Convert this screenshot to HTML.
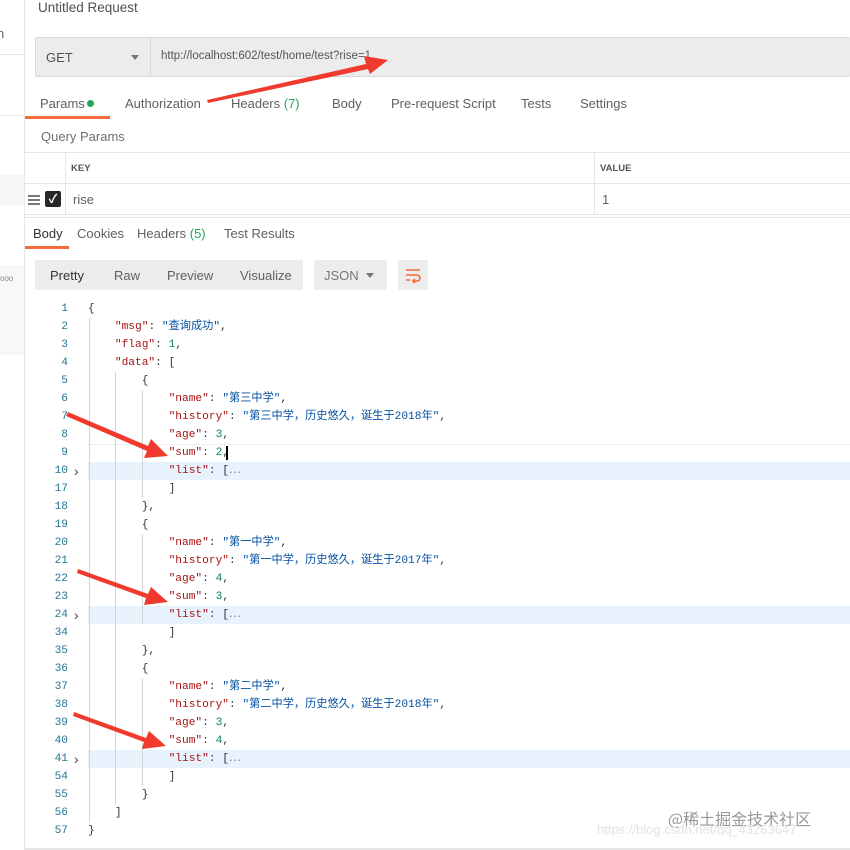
<!DOCTYPE html>
<html><head><meta charset="utf-8"><style>
*{margin:0;padding:0;box-sizing:border-box}
body{width:850px;height:850px;overflow:hidden;background:#fff;font-family:"Liberation Sans","Noto Sans CJK SC",sans-serif;position:relative;color:#505050}
.a{position:absolute}
.t{font-size:13px;color:#606060;white-space:nowrap}
.code{font-family:"Liberation Mono","Noto Sans CJK SC",monospace;font-size:11.2px;white-space:pre;line-height:18px}
.ln{position:absolute;left:30px;width:38px;text-align:right;color:#237893;font-family:"Liberation Mono",monospace;font-size:11.2px;line-height:18px}
.k{color:#a31515}.s{color:#0451a5}.n{color:#098658}.p{color:#333}
.g{position:absolute;width:1px;background:#d3d3d3}
.ch{position:absolute;left:74px;color:#444;font-size:14px;font-family:"Liberation Sans",sans-serif}
</style></head><body>
<div class="a" style="left:24px;top:0;width:1px;height:850px;background:#e6e6e6"></div>
<div class="a" style="left:0;top:54px;width:24px;height:1px;background:#e6e6e6"></div>
<div class="a" style="left:0;top:115px;width:24px;height:1px;background:#ececec"></div>
<div class="a" style="left:0;top:175px;width:24px;height:30px;background:#f6f6f6"></div>
<div class="a" style="left:0;top:265px;width:24px;height:90px;background:#f8f8f8"></div>
<div class="a t" style="left:-3px;top:26px;font-size:13px">n</div>
<div class="a" style="left:0;top:274px;font-size:8px;color:#888">ooo</div>

<div class="a" style="left:38px;top:0px;font-size:13.5px;color:#505050">Untitled Request</div>
<div class="a" style="left:35px;top:37px;width:815px;height:40px;background:#ececec;border:1px solid #d8d8d8;border-right:none;border-radius:2px"></div>
<div class="a" style="left:150px;top:38px;width:1px;height:38px;background:#d8d8d8"></div>
<div class="a t" style="left:46px;top:50px;color:#505050">GET</div>
<div class="a" style="left:131px;top:55px;border-left:4px solid transparent;border-right:4px solid transparent;border-top:5px solid #777"></div>
<div class="a t" style="left:161px;top:50px;font-size:11.5px;color:#555">http://localhost:602/test/home/test?rise=1</div>
<div class="a t" style="left:40px;top:96px">Params</div>
<div class="a" style="left:87px;top:100px;width:7px;height:7px;border-radius:50%;background:#26a55a"></div>
<div class="a" style="left:25px;top:116px;width:85px;height:3px;background:#f26b3a"></div>
<div class="a t" style="left:125px;top:96px">Authorization</div>
<div class="a t" style="left:231px;top:96px">Headers <span style="color:#26a55a">(7)</span></div>
<div class="a t" style="left:332px;top:96px">Body</div>
<div class="a t" style="left:391px;top:96px">Pre-request Script</div>
<div class="a t" style="left:521px;top:96px">Tests</div>
<div class="a t" style="left:580px;top:96px">Settings</div>
<div class="a t" style="left:41px;top:129px;color:#707070">Query Params</div>
<div class="a" style="left:25px;top:152px;width:825px;height:1px;background:#e6e6e6"></div>
<div class="a" style="left:25px;top:183px;width:825px;height:1px;background:#e6e6e6"></div>
<div class="a" style="left:25px;top:214px;width:825px;height:1px;background:#e6e6e6"></div>
<div class="a" style="left:65px;top:152px;width:1px;height:63px;background:#e6e6e6"></div>
<div class="a" style="left:594px;top:152px;width:1px;height:63px;background:#e6e6e6"></div>
<div class="a" style="left:71px;top:163px;font-size:9.5px;font-weight:bold;color:#555">KEY</div>
<div class="a" style="left:600px;top:163px;font-size:9.5px;font-weight:bold;color:#555">VALUE</div>
<div class="a" style="left:28px;top:195px;width:12px;height:2px;background:#777;box-shadow:0 4px 0 #777,0 8px 0 #777"></div>
<div class="a" style="left:45px;top:191px;width:16px;height:16px;background:#282828;border-radius:2px;color:#fff;font-size:12px;text-align:center;line-height:16px;font-weight:bold">✓</div>
<div class="a t" style="left:73px;top:192px">rise</div>
<div class="a t" style="left:602px;top:192px">1</div>
<div class="a" style="left:25px;top:217px;width:825px;height:1px;background:#e6e6e6"></div>
<div class="a t" style="left:33px;top:226px;color:#333">Body</div>
<div class="a" style="left:25px;top:246px;width:44px;height:3px;background:#f26b3a"></div>
<div class="a t" style="left:77px;top:226px">Cookies</div>
<div class="a t" style="left:137px;top:226px">Headers <span style="color:#26a55a">(5)</span></div>
<div class="a t" style="left:224px;top:226px">Test Results</div>
<div class="a" style="left:35px;top:260px;width:268px;height:30px;background:#ececec;border-radius:2px"></div>
<div class="a t" style="left:50px;top:268px;color:#333">Pretty</div>
<div class="a t" style="left:114px;top:268px">Raw</div>
<div class="a t" style="left:167px;top:268px">Preview</div>
<div class="a t" style="left:240px;top:268px">Visualize</div>
<div class="a" style="left:314px;top:260px;width:73px;height:30px;background:#ececec;border-radius:2px"></div>
<div class="a t" style="left:324px;top:268px;color:#777">JSON</div>
<div class="a" style="left:366px;top:273px;border-left:4px solid transparent;border-right:4px solid transparent;border-top:5px solid #777"></div>
<div class="a" style="left:398px;top:260px;width:30px;height:30px;background:#ececec;border-radius:2px"></div>
<svg class="a" style="left:404px;top:266px" width="18" height="18" viewBox="0 0 18 18" fill="none" stroke="#f26b3a" stroke-width="1.6"><path d="M2 4h14M2 9h11a3 3 0 0 1 0 6H9M11 13l-2 2 2 2M2 14h4"/></svg>

<div class="a" style="left:88px;top:444px;width:762px;height:19px;border-top:1px solid #eee;border-bottom:1px solid #eee"></div>
<div class="a" style="left:88px;top:462px;width:762px;height:18px;background:#e8f2fc"></div>
<div class="a" style="left:88px;top:606px;width:762px;height:18px;background:#e8f2fc"></div>
<div class="a" style="left:88px;top:750px;width:762px;height:18px;background:#e8f2fc"></div>
<div class="a" style="left:226px;top:446px;width:2px;height:14px;background:#000"></div>
<div class="g" style="left:89px;top:318px;height:505px"></div>
<div class="g" style="left:115px;top:372px;height:433px"></div>
<div class="g" style="left:142px;top:390px;height:108px"></div>
<div class="g" style="left:142px;top:534px;height:90px"></div>
<div class="g" style="left:142px;top:678px;height:108px"></div>

<div class="a" style="left:25px;top:848px;width:825px;height:2px;background:#e6e6e6"></div>
<div class="a" style="left:668px;top:806px;font-size:16px;color:#999;font-family:'Noto Sans CJK SC',sans-serif">@稀土掘金技术社区</div>
<div class="a" style="left:597px;top:822px;font-size:13px;color:#e2e2e2">https://blog.csdn.net/qq_43263647</div>

<svg class="a" style="left:0;top:0" width="850" height="850">
<g fill="#f03a2e">
<polygon points="207,100 366,64 364,56 388,60 370,74 368,69 208,103"/>
<polygon points="68,412 148,446 151,439 168,456 144,458 147,451 66,416"/>
<polygon points="78,569 148,594 151,587 168,602 144,605 146,598 77,573"/>
<polygon points="74,712 146,738 149,731 166,746 142,749 144,742 73,716"/>
</g></svg>

<div class="a code" style="left:0;top:0">
<div class="ln" style="top:300px">1</div><div class="a" style="left:88px;top:300px"><span class="p">{</span></div>
<div class="ln" style="top:318px">2</div><div class="a" style="left:88px;top:318px">    <span class="k">"msg"</span><span class="p">: </span><span class="s">"查询成功"</span><span class="p">,</span></div>
<div class="ln" style="top:336px">3</div><div class="a" style="left:88px;top:336px">    <span class="k">"flag"</span><span class="p">: </span><span class="n">1</span><span class="p">,</span></div>
<div class="ln" style="top:354px">4</div><div class="a" style="left:88px;top:354px">    <span class="k">"data"</span><span class="p">: [</span></div>
<div class="ln" style="top:372px">5</div><div class="a" style="left:88px;top:372px">        <span class="p">{</span></div>
<div class="ln" style="top:390px">6</div><div class="a" style="left:88px;top:390px">            <span class="k">"name"</span><span class="p">: </span><span class="s">"第三中学"</span><span class="p">,</span></div>
<div class="ln" style="top:408px">7</div><div class="a" style="left:88px;top:408px">            <span class="k">"history"</span><span class="p">: </span><span class="s">"第三中学，历史悠久，诞生于2018年"</span><span class="p">,</span></div>
<div class="ln" style="top:426px">8</div><div class="a" style="left:88px;top:426px">            <span class="k">"age"</span><span class="p">: </span><span class="n">3</span><span class="p">,</span></div>
<div class="ln" style="top:444px">9</div><div class="a" style="left:88px;top:444px">            <span class="k">"sum"</span><span class="p">: </span><span class="n">2</span><span class="p">,</span></div>
<div class="ln" style="top:462px">10</div><div class="ch" style="top:462px">›</div><div class="a" style="left:88px;top:462px">            <span class="k">"list"</span><span class="p">: [</span><span style="color:#888">⋯</span></div>
<div class="ln" style="top:480px">17</div><div class="a" style="left:88px;top:480px">            <span class="p">]</span></div>
<div class="ln" style="top:498px">18</div><div class="a" style="left:88px;top:498px">        <span class="p">},</span></div>
<div class="ln" style="top:516px">19</div><div class="a" style="left:88px;top:516px">        <span class="p">{</span></div>
<div class="ln" style="top:534px">20</div><div class="a" style="left:88px;top:534px">            <span class="k">"name"</span><span class="p">: </span><span class="s">"第一中学"</span><span class="p">,</span></div>
<div class="ln" style="top:552px">21</div><div class="a" style="left:88px;top:552px">            <span class="k">"history"</span><span class="p">: </span><span class="s">"第一中学，历史悠久，诞生于2017年"</span><span class="p">,</span></div>
<div class="ln" style="top:570px">22</div><div class="a" style="left:88px;top:570px">            <span class="k">"age"</span><span class="p">: </span><span class="n">4</span><span class="p">,</span></div>
<div class="ln" style="top:588px">23</div><div class="a" style="left:88px;top:588px">            <span class="k">"sum"</span><span class="p">: </span><span class="n">3</span><span class="p">,</span></div>
<div class="ln" style="top:606px">24</div><div class="ch" style="top:606px">›</div><div class="a" style="left:88px;top:606px">            <span class="k">"list"</span><span class="p">: [</span><span style="color:#888">⋯</span></div>
<div class="ln" style="top:624px">34</div><div class="a" style="left:88px;top:624px">            <span class="p">]</span></div>
<div class="ln" style="top:642px">35</div><div class="a" style="left:88px;top:642px">        <span class="p">},</span></div>
<div class="ln" style="top:660px">36</div><div class="a" style="left:88px;top:660px">        <span class="p">{</span></div>
<div class="ln" style="top:678px">37</div><div class="a" style="left:88px;top:678px">            <span class="k">"name"</span><span class="p">: </span><span class="s">"第二中学"</span><span class="p">,</span></div>
<div class="ln" style="top:696px">38</div><div class="a" style="left:88px;top:696px">            <span class="k">"history"</span><span class="p">: </span><span class="s">"第二中学，历史悠久，诞生于2018年"</span><span class="p">,</span></div>
<div class="ln" style="top:714px">39</div><div class="a" style="left:88px;top:714px">            <span class="k">"age"</span><span class="p">: </span><span class="n">3</span><span class="p">,</span></div>
<div class="ln" style="top:732px">40</div><div class="a" style="left:88px;top:732px">            <span class="k">"sum"</span><span class="p">: </span><span class="n">4</span><span class="p">,</span></div>
<div class="ln" style="top:750px">41</div><div class="ch" style="top:750px">›</div><div class="a" style="left:88px;top:750px">            <span class="k">"list"</span><span class="p">: [</span><span style="color:#888">⋯</span></div>
<div class="ln" style="top:768px">54</div><div class="a" style="left:88px;top:768px">            <span class="p">]</span></div>
<div class="ln" style="top:786px">55</div><div class="a" style="left:88px;top:786px">        <span class="p">}</span></div>
<div class="ln" style="top:804px">56</div><div class="a" style="left:88px;top:804px">    <span class="p">]</span></div>
<div class="ln" style="top:822px">57</div><div class="a" style="left:88px;top:822px"><span class="p">}</span></div>
</div>
</body></html>
